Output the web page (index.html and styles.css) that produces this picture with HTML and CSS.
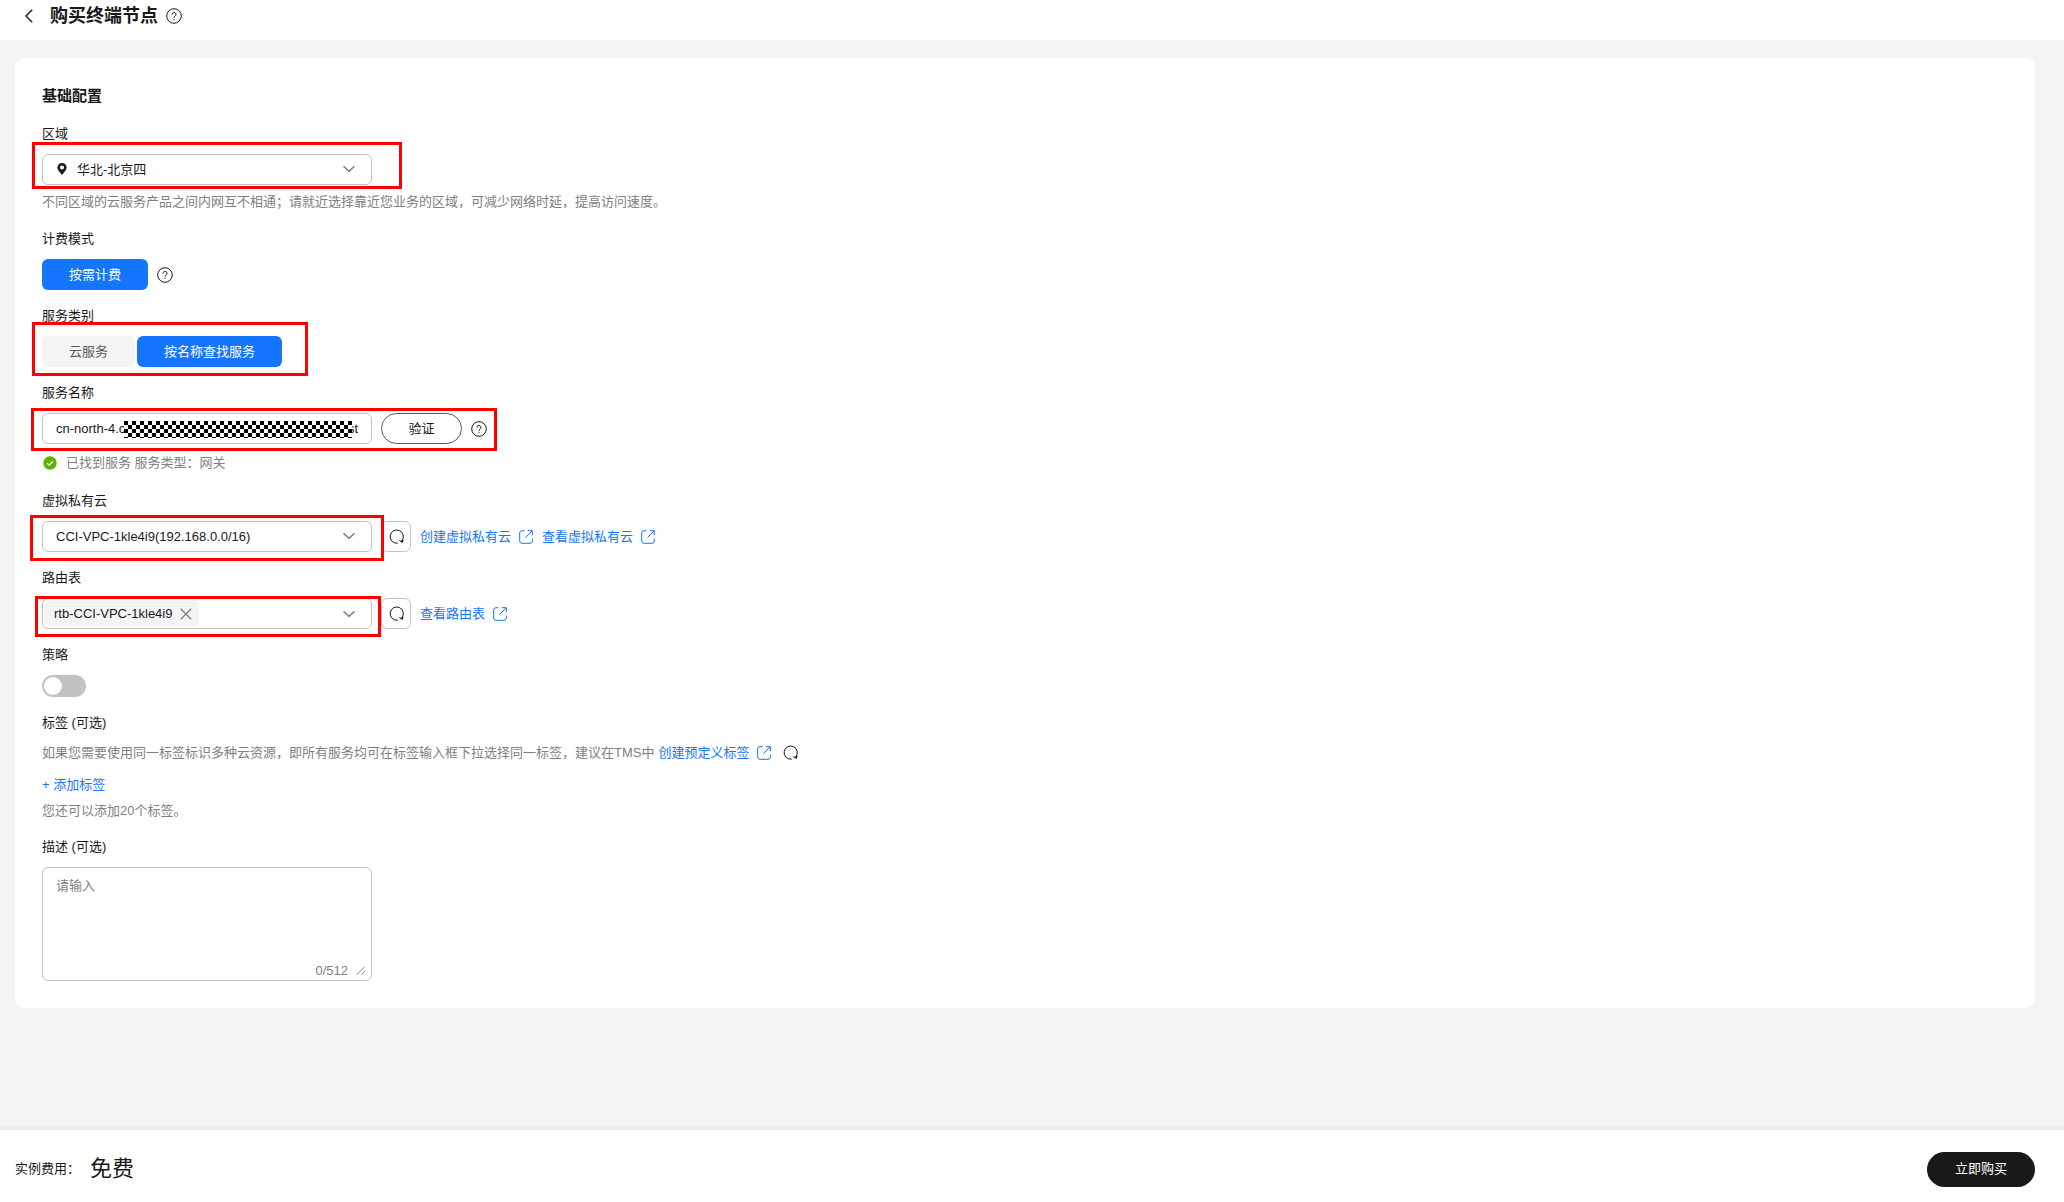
FILE: index.html
```html
<!DOCTYPE html>
<html lang="zh-CN">
<head>
    <meta charset="UTF-8">
    <meta name="viewport" content="width=device-width, initial-scale=1.0">
    <title>购买终端节点</title>
    <link rel="stylesheet" href="styles.css">
</head>
<body>
    <!-- shared icons -->
    <svg class="sprite" aria-hidden="true">
        <symbol id="i-help" viewBox="0 0 16 16">
            <circle cx="8" cy="8" r="7.3"/>
            <path d="M6 6.6a2 2 0 1 1 3 1.6c-.7.4-1 .7-1 1.5M8 10.8v1.1"/>
        </symbol>
        <symbol id="i-down" viewBox="0 0 14 8"><path d="M1.5 1.2 7 6.4l5.500-5.200"/></symbol>
        <symbol id="i-refresh" viewBox="0 0 16 16">
            <path d="M9.800 14.100A6.600 6.600 0 1 1 13.800 11.800"/>
            <path class="fill" d="M10.200 11.200l4.300 2.800 1.400-3.400-2.300 1.200z"/>
        </symbol>
        <symbol id="i-link" viewBox="0 0 14 14">
            <path d="M5.500.7H3A2.300 2.300 0 0 0 .7 3v8A2.300 2.300 0 0 0 3 13.300h8a2.300 2.300 0 0 0 2.300-2.300V8.500M6.500 7.500 13 1M8.800.7h4.500v4.500"/>
        </symbol>
    </svg>

    <header class="header">
        <button class="icon-btn back" type="button" aria-label="返回">
            <svg width="8" height="14" viewBox="0 0 8 14"><path d="M7.200.8 1 7l6.200 6.200"/></svg>
        </button>
        <h1>购买终端节点</h1>
        <button class="icon-btn" type="button" aria-label="帮助"><svg width="16" height="16"><use href="#i-help"/></svg></button>
    </header>

    <main class="main">
        <form class="card" id="buyForm">
            <h2>基础配置</h2>

            <div class="field">
                <label for="region">区域</label>
                <div class="row">
                    <div class="select mark mark-region">
                        <svg class="pin" width="10" height="12" viewBox="0 0 10 12"><path d="M5 0a4.600 4.600 0 0 0-4.600 4.600C.4 7.500 3 9.200 5 12c2-2.800 4.600-4.500 4.600-7.400A4.600 4.600 0 0 0 5 0zm0 2.500a2 2 0 1 1 0 4 2 2 0 0 1 0-4z"/></svg>
                        <select id="region" class="has-pin"><option>华北-北京四</option></select>
                        <svg class="arrow" width="14" height="8"><use href="#i-down"/></svg>
                    </div>
                </div>
                <p class="hint">不同区域的云服务产品之间内网互不相通；请就近选择靠近您业务的区域，可减少网络时延，提高访问速度。</p>
            </div>

            <div class="field">
                <span class="label">计费模式</span>
                <div class="row">
                    <button class="option active" type="button">按需计费</button>
                    <button class="icon-btn" type="button" aria-label="计费说明"><svg width="16" height="16"><use href="#i-help"/></svg></button>
                </div>
            </div>

            <div class="field">
                <span class="label">服务类别</span>
                <div class="row">
                    <div class="options mark mark-type">
                        <button class="option" type="button">云服务</button>
                        <button class="option active" type="button">按名称查找服务</button>
                    </div>
                </div>
            </div>

            <div class="field">
                <label for="serviceName">服务名称</label>
                <div class="row">
                    <div class="verify mark mark-name">
                        <div class="masked">
                            <input id="serviceName" type="text" value="cn-north-4.c********************************************st">
                            <span class="mosaic"></span>
                        </div>
                        <button class="verify-btn" type="button">验证</button>
                        <button class="icon-btn" type="button" aria-label="服务名称说明"><svg width="16" height="16"><use href="#i-help"/></svg></button>
                    </div>
                </div>
                <p class="status">
                    <svg width="14" height="14" viewBox="0 0 14 14"><circle cx="7" cy="7" r="6.700"/><path d="M4 7.100l2.200 2.100L10 5.300"/></svg>
                    已找到服务 服务类型：网关
                </p>
            </div>

            <div class="field">
                <label for="vpc">虚拟私有云</label>
                <div class="row">
                    <div class="select mark mark-vpc">
                        <select id="vpc"><option>CCI-VPC-1kle4i9(192.168.0.0/16)</option></select>
                        <svg class="arrow" width="14" height="8"><use href="#i-down"/></svg>
                    </div>
                    <button class="refresh" type="button" aria-label="刷新"><svg width="16" height="16"><use href="#i-refresh"/></svg></button>
                    <a class="link" href="#">创建虚拟私有云<svg width="14" height="14"><use href="#i-link"/></svg></a>
                    <a class="link" href="#">查看虚拟私有云<svg width="14" height="14"><use href="#i-link"/></svg></a>
                </div>
            </div>

            <div class="field">
                <span class="label">路由表</span>
                <div class="row">
                    <div class="select tags mark mark-route">
                        <span class="tag">rtb-CCI-VPC-1kle4i9
                            <button class="icon-btn" type="button" aria-label="移除"><svg width="12" height="12" viewBox="0 0 12 12"><path d="M.8.8l10.400 10.400M11.200.8.8 11.200"/></svg></button>
                        </span>
                        <button class="icon-btn open" type="button" aria-label="展开路由表"><svg width="14" height="8"><use href="#i-down"/></svg></button>
                    </div>
                    <button class="refresh" type="button" aria-label="刷新"><svg width="16" height="16"><use href="#i-refresh"/></svg></button>
                    <a class="link" href="#">查看路由表<svg width="14" height="14"><use href="#i-link"/></svg></a>
                </div>
            </div>

            <div class="field">
                <label for="policy">策略</label>
                <input class="switch" id="policy" type="checkbox">
            </div>

            <div class="field">
                <span class="label">标签 (可选)</span>
                <p class="hint tag-hint">如果您需要使用同一标签标识多种云资源，即所有服务均可在标签输入框下拉选择同一标签，建议在TMS中
                    <a class="link" href="#">创建预定义标签<svg width="14" height="14"><use href="#i-link"/></svg></a>
                    <button class="icon-btn" type="button" aria-label="刷新标签"><svg width="16" height="16"><use href="#i-refresh"/></svg></button>
                </p>
                <button class="add" type="button">+ 添加标签</button>
                <p class="left">您还可以添加20个标签。</p>
            </div>

            <div class="field">
                <label for="desc">描述 (可选)</label>
                <div class="textarea">
                    <textarea id="desc" placeholder="请输入" maxlength="512"></textarea>
                    <span class="count">0/512<svg width="10" height="10" viewBox="0 0 10 10"><path d="M.8 8.800 8.500.9M5.300 8.800l3.800-4"/></svg></span>
                </div>
            </div>
        </form>
    </main>

    <footer class="footer">
        <span>实例费用：</span>
        <strong>免费</strong>
        <button class="buy" type="submit" form="buyForm">立即购买</button>
    </footer>
</body>
</html>
```

FILE: styles.css
```css
* { box-sizing: border-box; }
body { margin: 0; min-height: 100vh; display: flex; flex-direction: column; background: #f4f4f4; color: #191919; font: 13px/20px "Liberation Sans", "Noto Sans CJK SC", sans-serif; }
h1, h2, p { margin: 0; }
button, input, select, textarea { font: inherit; color: inherit; margin: 0; }
button { cursor: pointer; }
svg { fill: none; stroke: currentColor; flex: none; display: block; }
svg .fill { fill: currentColor; stroke: none; }
.sprite { display: none; }
.icon-btn { display: flex; padding: 0; border: 0; background: none; }

.header { display: flex; align-items: center; height: 40px; padding: 0 25px 9px; background: #fff; }
.header h1 { margin: 0 8px 0 17px; font-size: 18px; line-height: 24px; }
.back svg { stroke-width: 1.4; }

.main { flex: 1; padding: 18px 29px 18px 15px; }
.card { padding: 28px 27px 27px; background: #fff; border-radius: 9px; }
.card h2 { margin-bottom: 18px; font-size: 15px; line-height: 20px; }
.field { margin-bottom: 16px; }
.field:last-child { margin-bottom: 0; }
.field > label, .label { display: block; margin-bottom: 10px; }
.row { display: flex; align-items: center; gap: 9px; }
.hint, .left { color: #808080; }
.row + .hint { margin: 7px 0 17px; }

.select { position: relative; width: 330px; height: 31px; }
.select select { width: 100%; height: 31px; padding: 0 40px 0 13px; border: 1px solid #c2c2c2; border-radius: 6px; background: #fff; appearance: none; }
.select .has-pin { padding-left: 34px; }
.arrow { position: absolute; right: 16px; top: 11px; color: #808080; pointer-events: none; }
.arrow, .open svg { stroke-width: 1.5; }
.pin { position: absolute; left: 15px; top: 9px; fill: #191919; stroke: none; }

.option { height: 31px; padding: 0 27px; border: 0; border-radius: 6px; background: #f4f4f4; color: #595959; }
.option.active { background: #1476ff; color: #fff; }
.options { display: flex; gap: 2px; }

.verify { display: flex; align-items: center; gap: 9px; }
.masked { position: relative; }
.masked input { width: 330px; height: 31px; padding: 0 13px; border: 1px solid #c2c2c2; border-radius: 6px; }
.mosaic { position: absolute; left: 82px; top: 8px; width: 228px; height: 17px; background: repeating-conic-gradient(#fff 0 25%, #000 0 50%) 0 0 / 8px 8px; }
.verify-btn { width: 81px; height: 31px; border: 1px solid #595959; border-radius: 16px; background: #fff; }
.status { display: flex; align-items: center; gap: 9px; margin-top: 7px; line-height: 24px; color: #808080; }
.status svg { margin-left: 1px; }
.status circle { fill: #5cb300; stroke: none; }
.status path { stroke: #fff; stroke-width: 1.3; }

.refresh { display: flex; align-items: center; justify-content: center; width: 30px; height: 31px; padding: 0; border: 1px solid #c2c2c2; border-radius: 6px; background: #fff; }
.link { display: flex; align-items: center; gap: 8px; color: #1476ff; text-decoration: none; }

.tags { display: flex; align-items: center; justify-content: space-between; padding: 0 15px 0 2px; border: 1px solid #c2c2c2; border-radius: 6px; }
.tag { display: flex; align-items: center; gap: 8px; height: 25px; padding: 0 7px 0 9px; border-radius: 5px; background: #f4f4f4; }
.tag svg { stroke-width: 1.3; }
.tag .icon-btn, .open { color: #808080; }

.switch { display: block; width: 44px; height: 22px; padding: 2px; border-radius: 11px; background: #c2c2c2; appearance: none; }
.switch::before { content: ""; display: block; width: 18px; height: 18px; border-radius: 50%; background: #fff; }
.switch:checked { background: #1476ff; }
.switch:checked::before { margin-left: auto; }

.tag-hint { display: flex; align-items: center; gap: 4px; }
.tag-hint .icon-btn { margin-left: 7px; color: #191919; }
.add { display: block; margin: 12px 0 6px; padding: 0; border: 0; background: none; color: #1476ff; }
.left { margin-bottom: 14px; }

.textarea { position: relative; width: 330px; }
.textarea textarea { display: block; width: 100%; height: 114px; padding: 8px 13px; border: 1px solid #c2c2c2; border-radius: 6px; resize: none; }
.textarea textarea::placeholder { color: #808080; }
.count { position: absolute; right: 6px; bottom: 0; display: flex; align-items: center; gap: 8px; color: #808080; }

/* red highlight frames */
.mark { position: relative; }
.mark::after { content: ""; position: absolute; z-index: 1; border: 3px solid #f00; pointer-events: none; }
.mark-region::after { inset: -12px -30px -4px -10px; }
.mark-type::after { inset: -14px -26px -9px -10px; }
.mark-name::after { inset: -5px -10px -7px -11px; }
.mark-vpc::after { inset: -6px -12px -9px -12px; }
.mark-route::after { inset: -3px -10px -9px -8px; }

.footer { display: flex; align-items: center; height: 72px; padding: 6px 29px 0 15px; background: #fff; box-shadow: 0 -1px 4px rgba(0, 0, 0, .1); }
.footer strong { margin-left: 10px; font-size: 22px; font-weight: 400; line-height: 28px; }
.buy { height: 35px; margin-left: auto; padding: 0 28px; border: 0; border-radius: 18px; background: #191919; color: #fff; }
```
